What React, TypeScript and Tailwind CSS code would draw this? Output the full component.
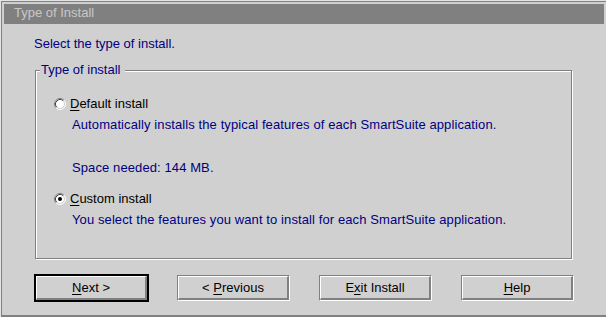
import React from 'react';

const font = { fontFamily: '"Liberation Sans", Arial, sans-serif' };

const Radio: React.FC<{ checked?: boolean }> = ({ checked }) => (
  <svg width="12" height="12" viewBox="0 0 12 12" className="shrink-0">
    <circle cx="6" cy="6" r="5" fill="#ffffff" />
    <path d="M2.11 9.89 A5.5 5.5 0 0 1 9.89 2.11" fill="none" stroke="#808080" strokeWidth="1" />
    <path d="M9.89 2.11 A5.5 5.5 0 0 1 2.11 9.89" fill="none" stroke="#ffffff" strokeWidth="1" />
    <path d="M2.82 9.18 A4.5 4.5 0 0 1 9.18 2.82" fill="none" stroke="#404040" strokeWidth="1" />
    <path d="M9.18 2.82 A4.5 4.5 0 0 1 2.82 9.18" fill="none" stroke="#d0d0d0" strokeWidth="1" />
    {checked && <circle cx="6" cy="6" r="2" fill="#000000" />}
  </svg>
);

const Button: React.FC<{ children: React.ReactNode; isDefault?: boolean; className?: string }> = ({
  children,
  isDefault,
  className,
}) =>
  isDefault ? (
    <div className={`h-[28px] border-2 border-black ${className ?? ''}`}>
      <div className="h-full border-t border-l border-white border-b-2 border-r-2 border-b-[#808080] border-r-[#808080] flex items-center justify-center text-[13px] text-black">
        {children}
      </div>
    </div>
  ) : (
    <div
      className={`h-[26px] border border-t-[#808080] border-l-[#808080] border-b-white border-r-white ${className ?? ''}`}
    >
      <div className="h-full border-t border-l border-white border-b-2 border-r-2 border-b-[#808080] border-r-[#808080] flex items-center justify-center text-[13px] text-black">
        {children}
      </div>
    </div>
  );

export default function App() {
  return (
    <div className="w-[606px] h-[317px] bg-[#d0d0d0] border-t border-l border-[#e4e4e4] overflow-hidden" style={font}>
      <div className="h-full border-t border-l border-[#808080] border-b-2 border-b-[#808080] pt-[2px] pl-[2px] pr-[2px]">
        <div className="h-[20px] bg-[#808080] pl-[10px] text-[13px] leading-[18px] text-[#c8c8c8]">
          Type of Install
        </div>

        <p className="mt-[12px] ml-[30px] text-[13px] leading-[16px] text-[#000080]">
          Select the type of install.
        </p>

        <div className="relative mt-[18px] ml-[31px] w-[537px] h-[189px] border border-[#808080] shadow-[1px_1px_0_#fff,inset_1px_1px_0_#fff] pt-[25px] pl-[18px]">
          <span className="absolute top-[-9px] left-[4px] bg-[#d0d0d0] px-[1px] pr-[4px] text-[13px] leading-[16px] text-[#000080]">
            Type of install
          </span>

          <div className="flex items-center gap-[4px] text-[13px] leading-[16px] text-black">
            <Radio />
            <span>
              <span className="underline underline-offset-2">D</span>efault install
            </span>
          </div>
          <p className="mt-[5px] ml-[18px] text-[13px] leading-[16px] tracking-[0.1px] text-[#000080]">
            Automatically installs the typical features of each SmartSuite application.
          </p>
          <p className="mt-[27px] ml-[18px] text-[13px] leading-[16px] tracking-[0.1px] text-[#000080]">
            Space needed: 144 MB.
          </p>

          <div className="mt-[15px] flex items-center gap-[4px] text-[13px] leading-[16px] text-black">
            <Radio checked />
            <span>
              <span className="underline underline-offset-2">C</span>ustom install
            </span>
          </div>
          <p className="mt-[5px] ml-[18px] text-[13px] leading-[16px] tracking-[0.1px] text-[#000080]">
            You select the features you want to install for each SmartSuite application.
          </p>
        </div>

        <div className="mt-[15px] ml-[30px] flex items-center">
          <Button isDefault className="w-[115px]">
            <span>
              <span className="underline underline-offset-2">N</span>ext &gt;
            </span>
          </Button>
          <Button className="ml-[28px] w-[113px]">
            <span>
              &lt; <span className="underline underline-offset-2">P</span>revious
            </span>
          </Button>
          <Button className="ml-[29px] w-[113px]">
            <span>
              E<span className="underline underline-offset-2">x</span>it Install
            </span>
          </Button>
          <Button className="ml-[29px] w-[113px]">
            <span>
              <span className="underline underline-offset-2">H</span>elp
            </span>
          </Button>
        </div>
      </div>
    </div>
  );
}
